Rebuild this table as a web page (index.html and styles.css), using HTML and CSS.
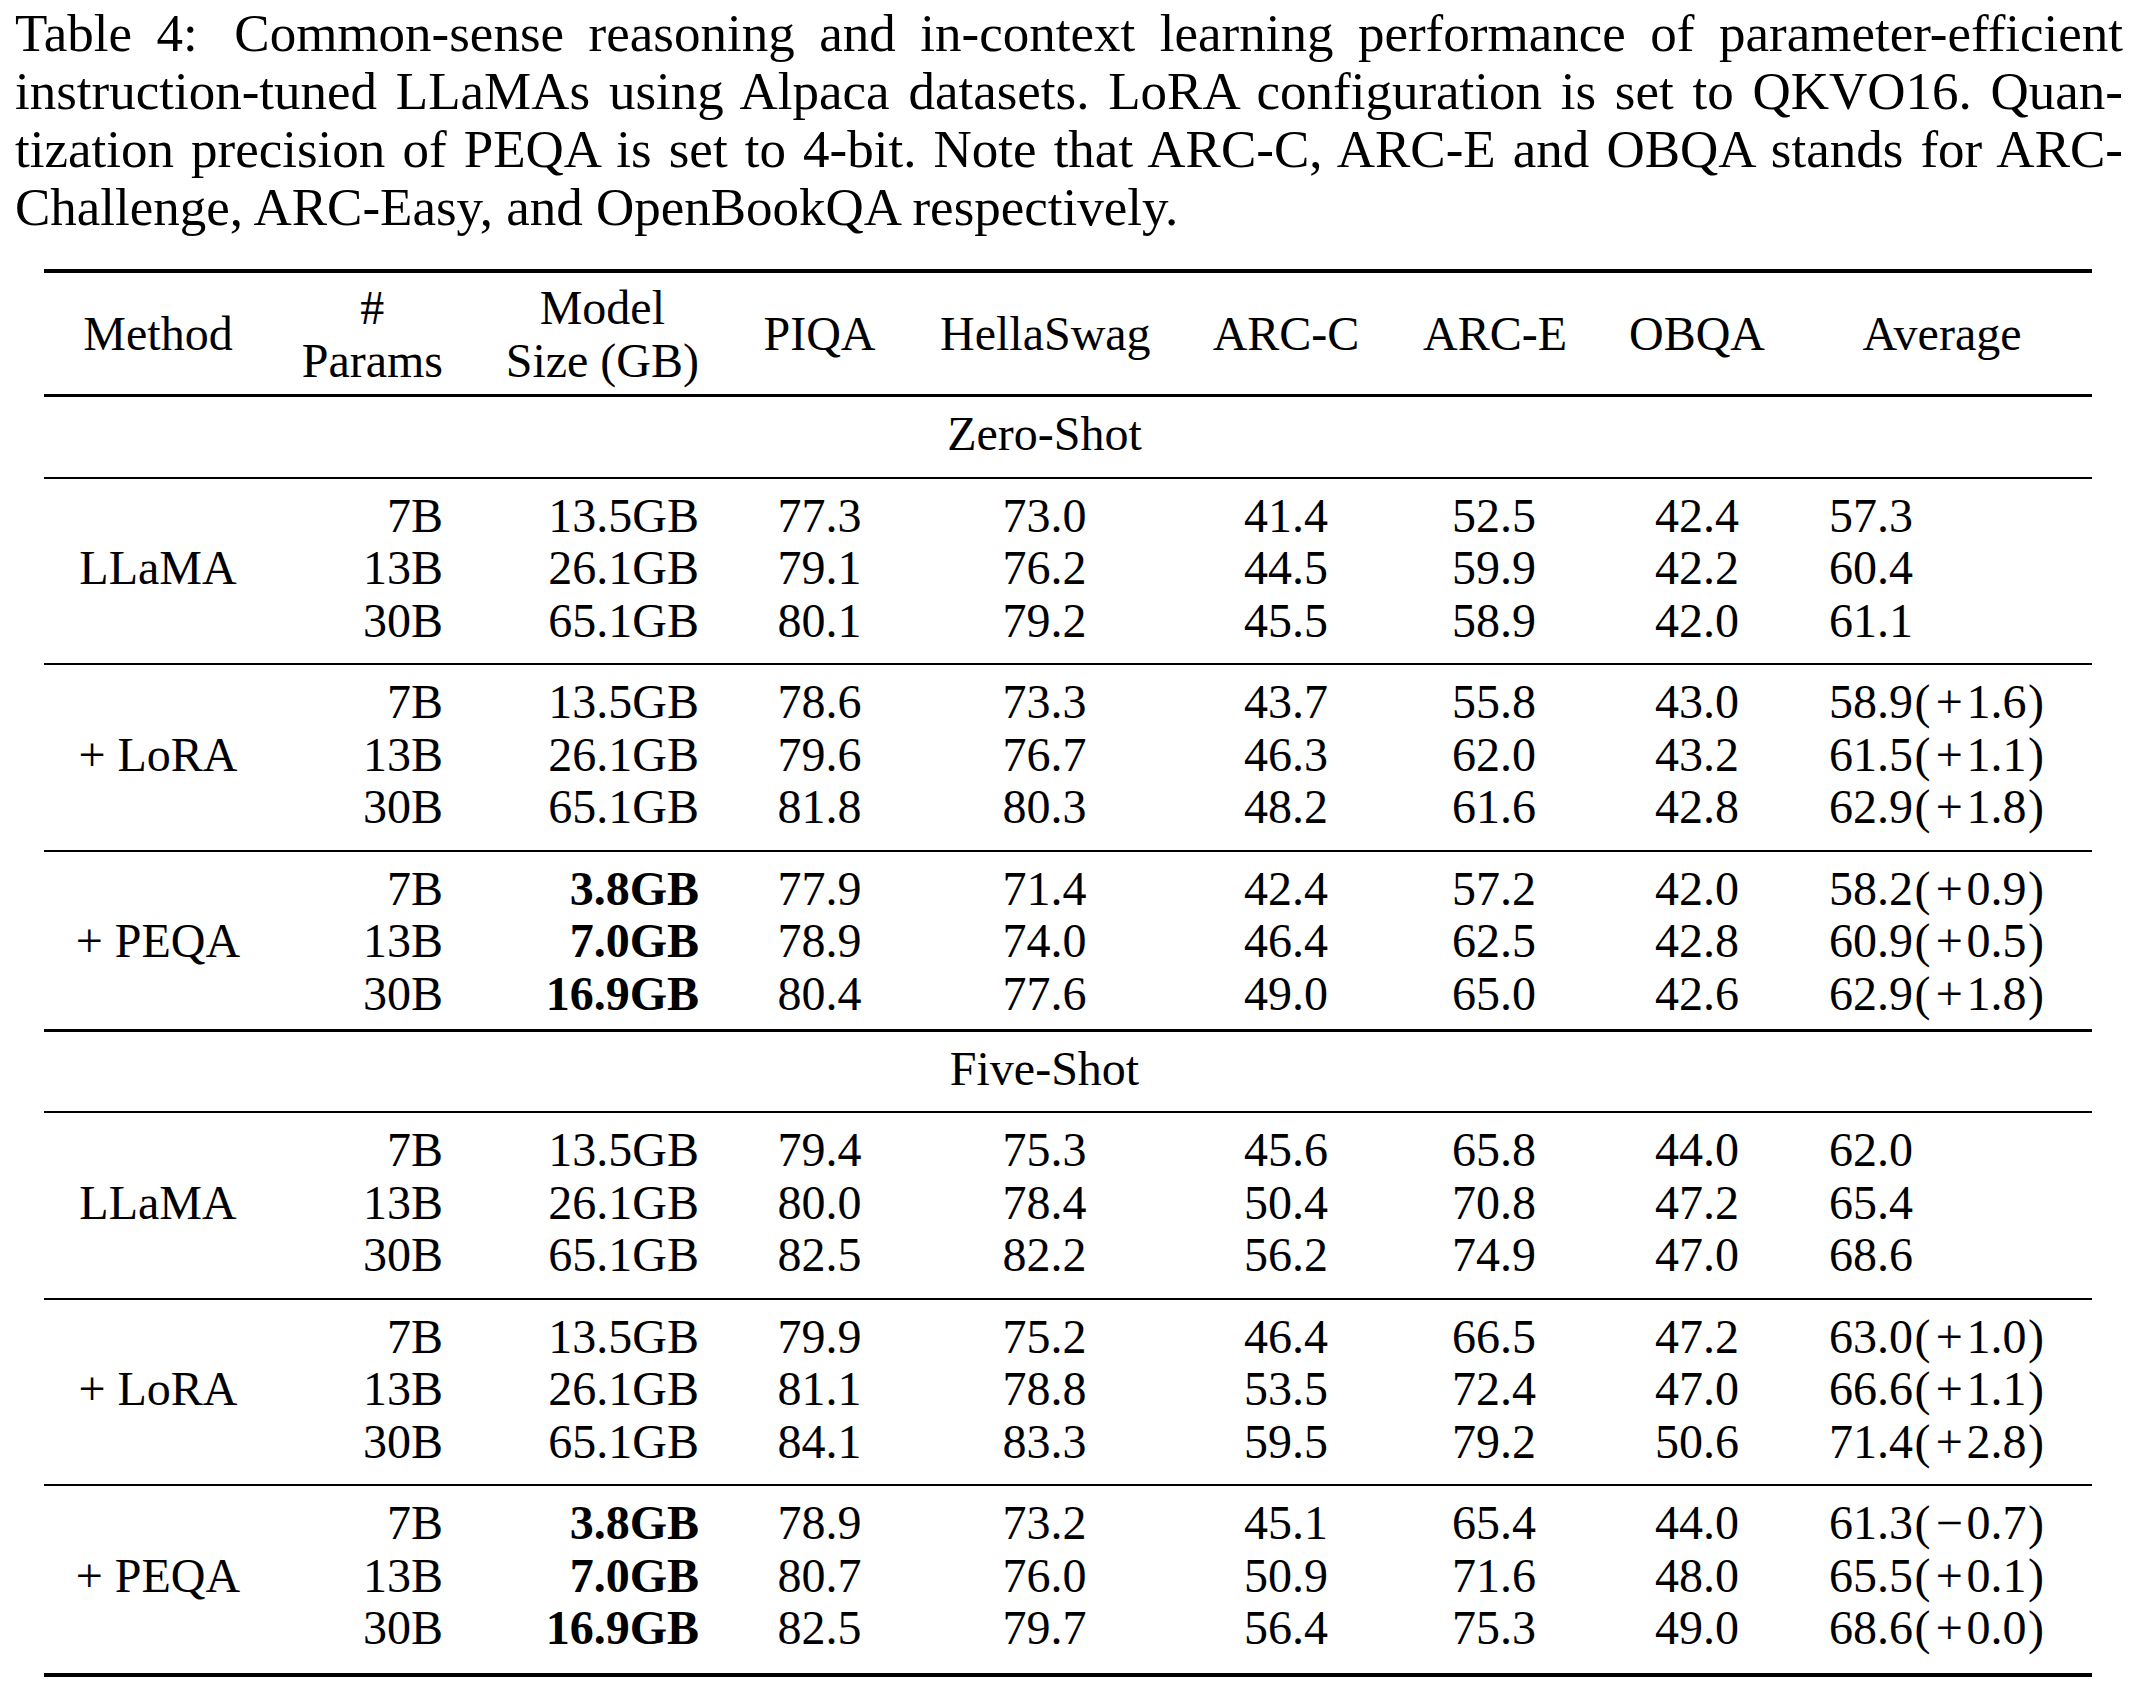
FILE: index.html
```html
<!DOCTYPE html>
<html>
<head>
<meta charset="utf-8">
<title>Table 4</title>
<link rel="stylesheet" href="styles.css">
</head>
<body>
<div class="page">
  <div class="caption">
    <div class="cl"><span class="lbl">Table 4:</span> Common-sense reasoning and in-context learning performance of parameter-efficient</div>
    <div class="cl">instruction-tuned LLaMAs using Alpaca datasets. LoRA configuration is set to QKVO16. Quan-</div>
    <div class="cl">tization precision of PEQA is set to 4-bit. Note that ARC-C, ARC-E and OBQA stands for ARC-</div>
    <div class="cl last">Challenge, ARC-Easy, and OpenBookQA respectively.</div>
  </div>

  <div class="tbl">
    <div class="grid head">
      <div class="c">Method</div>
      <div class="stack">#<br>Params</div>
      <div class="stack">Model<br>Size (GB)</div>
      <div class="c">PIQA</div>
      <div class="c">HellaSwag</div>
      <div class="c">ARC-C</div>
      <div class="c">ARC-E</div>
      <div class="c">OBQA</div>
      <div class="c avg-h">Average</div>
    </div>

    <div class="grid section"><div class="sec">Zero-Shot</div></div>

    <div class="grid group">
      <div class="m">LLaMA</div>
      <span class="r">7B</span><span class="r">13.5GB</span><span class="c">77.3</span><span class="c">73.0</span><span class="c">41.4</span><span class="c">52.5</span><span class="c">42.4</span><span class="l">57.3</span>
      <span class="r">13B</span><span class="r">26.1GB</span><span class="c">79.1</span><span class="c">76.2</span><span class="c">44.5</span><span class="c">59.9</span><span class="c">42.2</span><span class="l">60.4</span>
      <span class="r">30B</span><span class="r">65.1GB</span><span class="c">80.1</span><span class="c">79.2</span><span class="c">45.5</span><span class="c">58.9</span><span class="c">42.0</span><span class="l">61.1</span>
    </div>

    <div class="grid group">
      <div class="m">+ LoRA</div>
      <span class="r">7B</span><span class="r">13.5GB</span><span class="c">78.6</span><span class="c">73.3</span><span class="c">43.7</span><span class="c">55.8</span><span class="c">43.0</span><span class="l">58.9<span class="p">(</span><span class="op">+</span>1.6<span class="p">)</span></span>
      <span class="r">13B</span><span class="r">26.1GB</span><span class="c">79.6</span><span class="c">76.7</span><span class="c">46.3</span><span class="c">62.0</span><span class="c">43.2</span><span class="l">61.5<span class="p">(</span><span class="op">+</span>1.1<span class="p">)</span></span>
      <span class="r">30B</span><span class="r">65.1GB</span><span class="c">81.8</span><span class="c">80.3</span><span class="c">48.2</span><span class="c">61.6</span><span class="c">42.8</span><span class="l">62.9<span class="p">(</span><span class="op">+</span>1.8<span class="p">)</span></span>
    </div>

    <div class="grid group end">
      <div class="m">+ PEQA</div>
      <span class="r">7B</span><span class="r b">3.8GB</span><span class="c">77.9</span><span class="c">71.4</span><span class="c">42.4</span><span class="c">57.2</span><span class="c">42.0</span><span class="l">58.2<span class="p">(</span><span class="op">+</span>0.9<span class="p">)</span></span>
      <span class="r">13B</span><span class="r b">7.0GB</span><span class="c">78.9</span><span class="c">74.0</span><span class="c">46.4</span><span class="c">62.5</span><span class="c">42.8</span><span class="l">60.9<span class="p">(</span><span class="op">+</span>0.5<span class="p">)</span></span>
      <span class="r">30B</span><span class="r b">16.9GB</span><span class="c">80.4</span><span class="c">77.6</span><span class="c">49.0</span><span class="c">65.0</span><span class="c">42.6</span><span class="l">62.9<span class="p">(</span><span class="op">+</span>1.8<span class="p">)</span></span>
    </div>

    <div class="grid section"><div class="sec">Five-Shot</div></div>

    <div class="grid group">
      <div class="m">LLaMA</div>
      <span class="r">7B</span><span class="r">13.5GB</span><span class="c">79.4</span><span class="c">75.3</span><span class="c">45.6</span><span class="c">65.8</span><span class="c">44.0</span><span class="l">62.0</span>
      <span class="r">13B</span><span class="r">26.1GB</span><span class="c">80.0</span><span class="c">78.4</span><span class="c">50.4</span><span class="c">70.8</span><span class="c">47.2</span><span class="l">65.4</span>
      <span class="r">30B</span><span class="r">65.1GB</span><span class="c">82.5</span><span class="c">82.2</span><span class="c">56.2</span><span class="c">74.9</span><span class="c">47.0</span><span class="l">68.6</span>
    </div>

    <div class="grid group">
      <div class="m">+ LoRA</div>
      <span class="r">7B</span><span class="r">13.5GB</span><span class="c">79.9</span><span class="c">75.2</span><span class="c">46.4</span><span class="c">66.5</span><span class="c">47.2</span><span class="l">63.0<span class="p">(</span><span class="op">+</span>1.0<span class="p">)</span></span>
      <span class="r">13B</span><span class="r">26.1GB</span><span class="c">81.1</span><span class="c">78.8</span><span class="c">53.5</span><span class="c">72.4</span><span class="c">47.0</span><span class="l">66.6<span class="p">(</span><span class="op">+</span>1.1<span class="p">)</span></span>
      <span class="r">30B</span><span class="r">65.1GB</span><span class="c">84.1</span><span class="c">83.3</span><span class="c">59.5</span><span class="c">79.2</span><span class="c">50.6</span><span class="l">71.4<span class="p">(</span><span class="op">+</span>2.8<span class="p">)</span></span>
    </div>

    <div class="grid group final">
      <div class="m">+ PEQA</div>
      <span class="r">7B</span><span class="r b">3.8GB</span><span class="c">78.9</span><span class="c">73.2</span><span class="c">45.1</span><span class="c">65.4</span><span class="c">44.0</span><span class="l">61.3<span class="p">(</span><span class="op">&#8722;</span>0.7<span class="p">)</span></span>
      <span class="r">13B</span><span class="r b">7.0GB</span><span class="c">80.7</span><span class="c">76.0</span><span class="c">50.9</span><span class="c">71.6</span><span class="c">48.0</span><span class="l">65.5<span class="p">(</span><span class="op">+</span>0.1<span class="p">)</span></span>
      <span class="r">30B</span><span class="r b">16.9GB</span><span class="c">82.5</span><span class="c">79.7</span><span class="c">56.4</span><span class="c">75.3</span><span class="c">49.0</span><span class="l">68.6<span class="p">(</span><span class="op">+</span>0.0<span class="p">)</span></span>
    </div>
  </div>
</div>
</body>
</html>
```

FILE: styles.css
```css
html, body {
  margin: 0;
  padding: 0;
  background: #ffffff;
  color: #000000;
  font-family: "Liberation Serif", "Times New Roman", serif;
}

.page {
  margin: 4px 0 0 15px;
  width: 2108px;
}

.caption {
  font-size: 53px;
  line-height: 58px;
}

.cl {
  text-align: justify;
  text-align-last: justify;
}

.cl.last {
  text-align-last: left;
}

.lbl {
  margin-right: 12px;
}

.tbl {
  margin: 33px 0 0 29px;
  width: 2048px;
  border-top: 4px solid #000;
  border-bottom: 4px solid #000;
  font-size: 48px;
}

.grid {
  display: grid;
  grid-template-columns: 228px 171px 256px 241px 209px 274px 142px 264px 263px;
}

.head {
  padding: 9px 0 7px;
  line-height: 52.7px;
  align-items: center;
  border-bottom: 3px solid #000;
}

.stack {
  justify-self: end;
  text-align: center;
}

.avg-h {
  padding-right: 37px;
}

.section {
  padding: 11px 0 16px;
  line-height: 52.5px;
  border-bottom: 2px solid #000;
}

.sec {
  grid-column: 5;
  text-align: center;
  white-space: nowrap;
}

.group {
  padding: 11px 0 16px;
  grid-auto-rows: 52.5px;
  line-height: 52.5px;
  border-bottom: 2px solid #000;
}

.group.end {
  padding-bottom: 8.5px;
  border-bottom-width: 3px;
}

.group.final {
  padding-bottom: 18px;
  border-bottom: none;
}

.m {
  grid-row: span 3;
  align-self: center;
  text-align: center;
  white-space: nowrap;
}

.c {
  text-align: center;
  white-space: nowrap;
}

.r {
  text-align: right;
  white-space: nowrap;
}

.l {
  text-align: left;
  white-space: nowrap;
}

.b {
  font-weight: bold;
}

.p {
  margin: 0 0.03em;
}

.op {
  margin: 0 0.08em;
}
```
